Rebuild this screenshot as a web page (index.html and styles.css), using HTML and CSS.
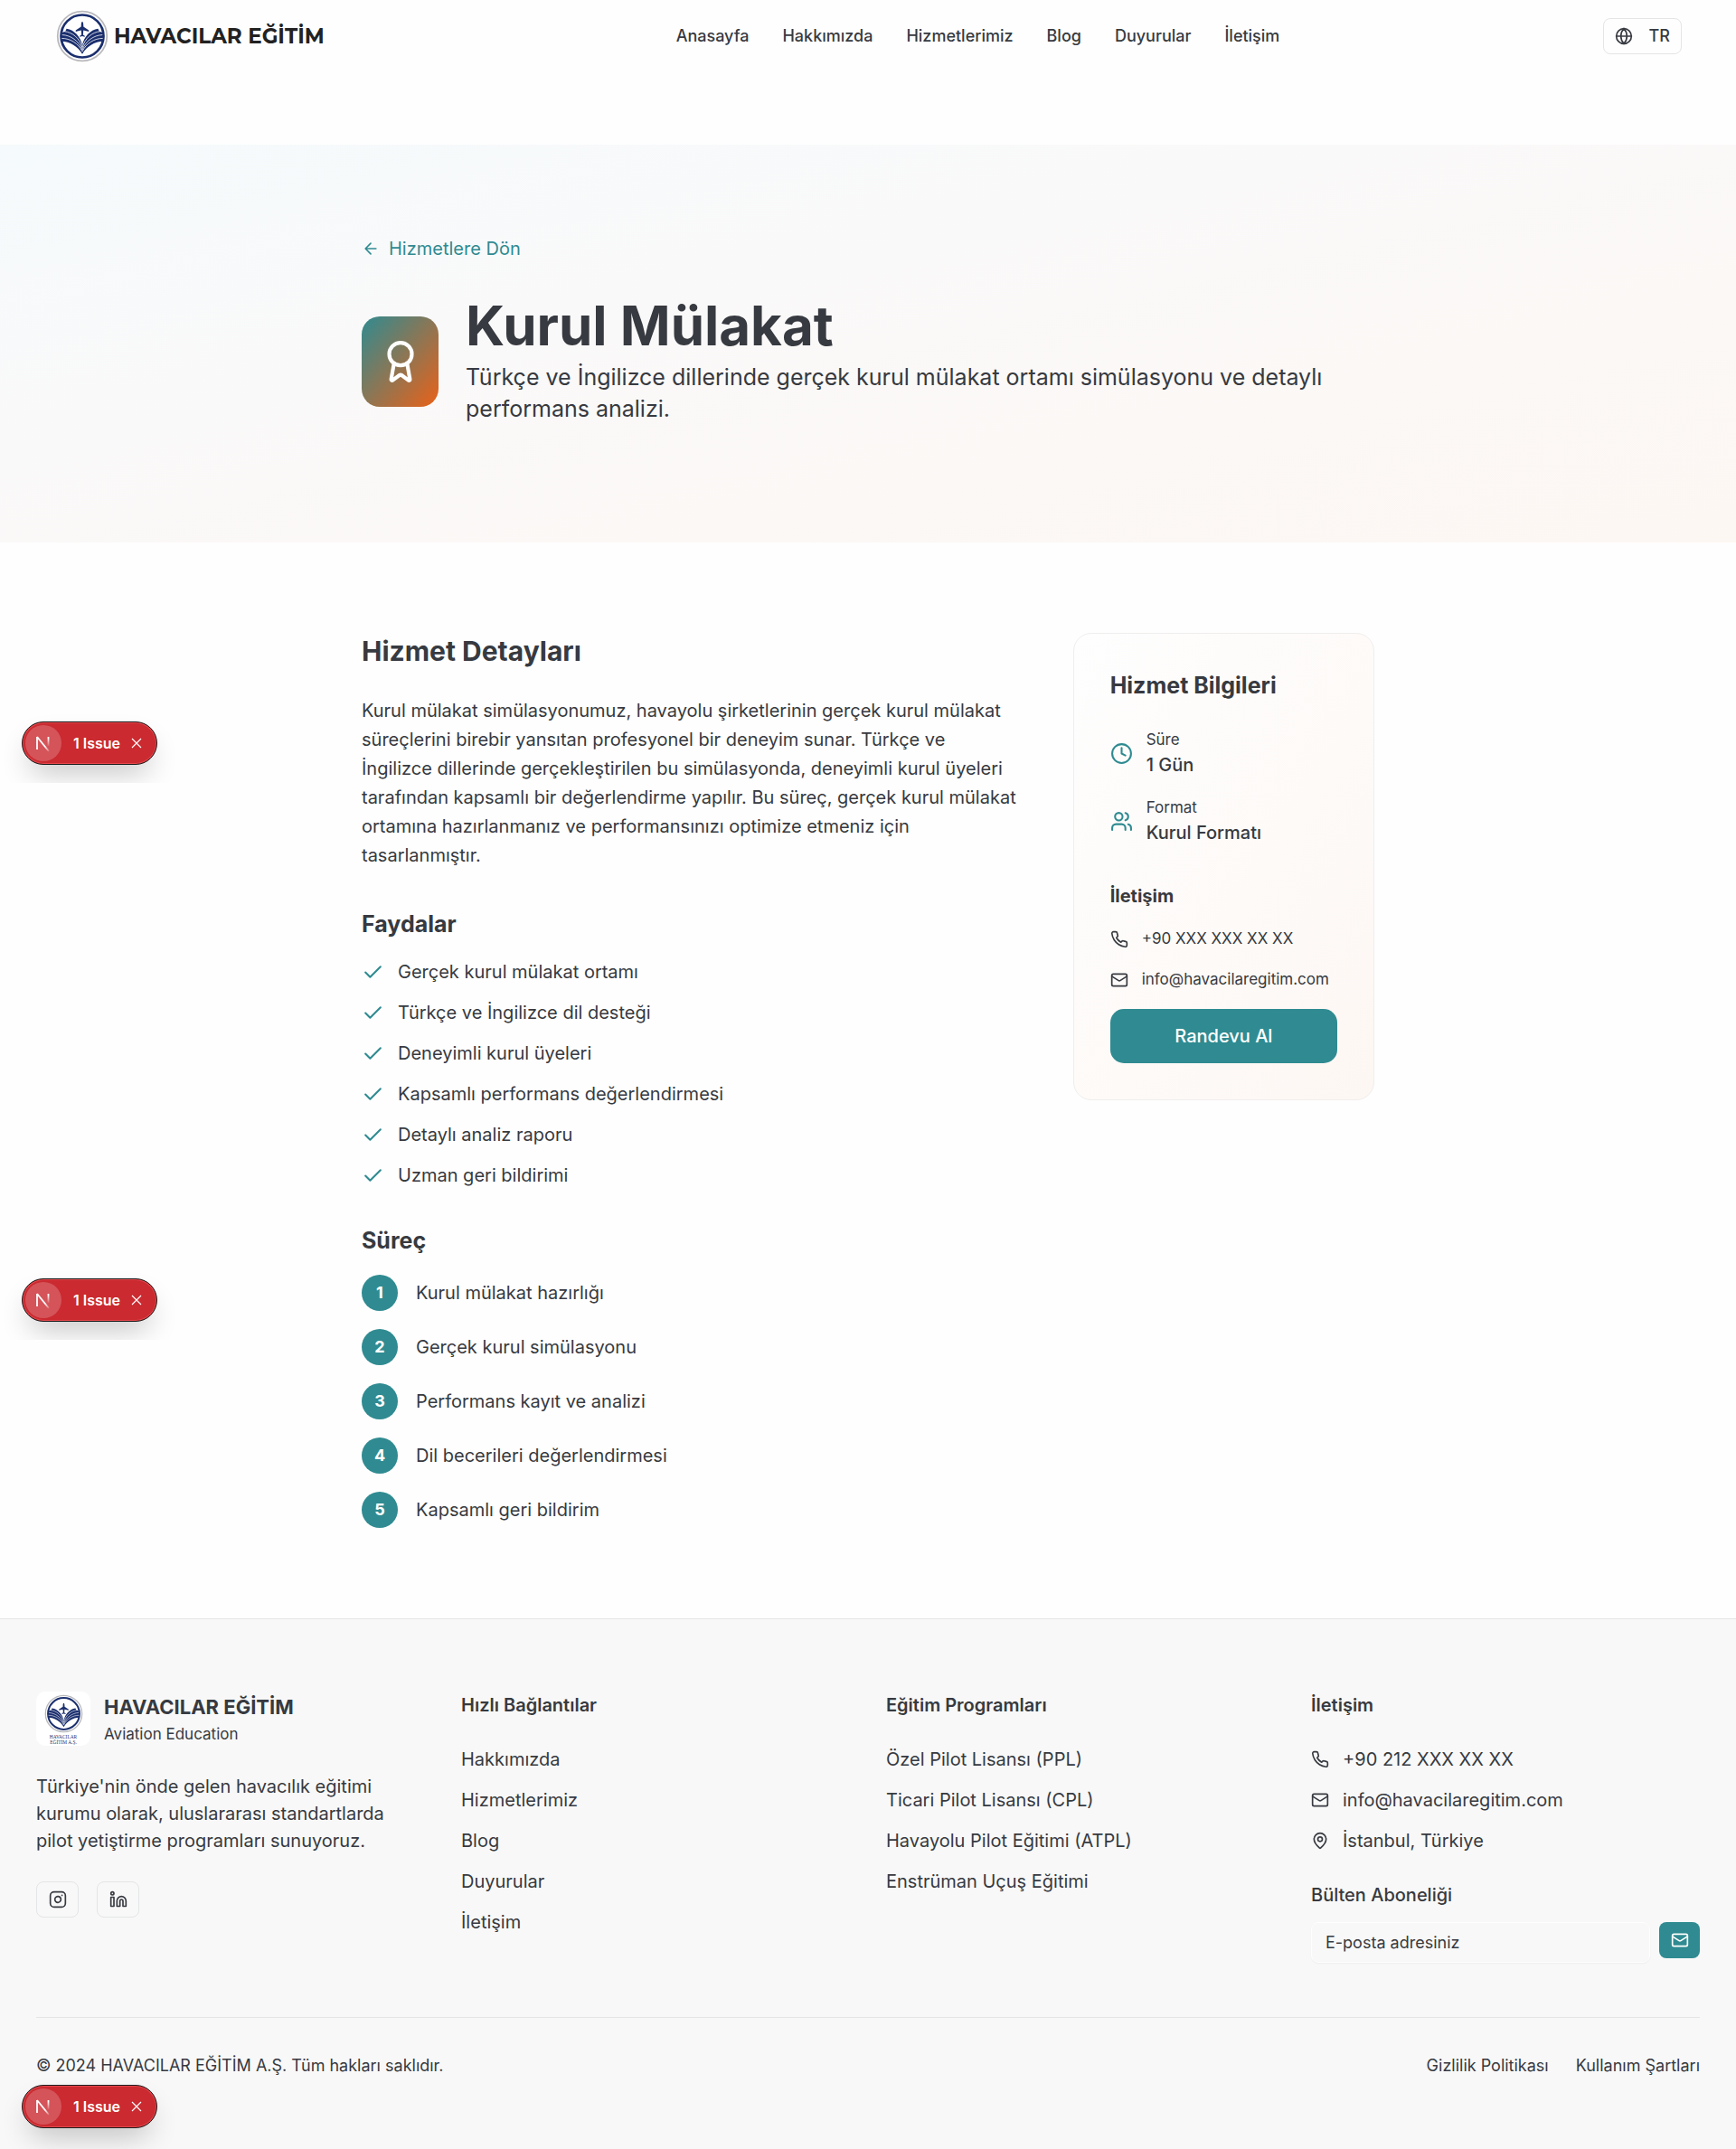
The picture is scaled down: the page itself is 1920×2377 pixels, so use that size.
FILE: index.html
```html
<!DOCTYPE html>
<html lang="tr">
<head>
<meta charset="utf-8">
<meta name="viewport" content="width=device-width, initial-scale=1">
<title>Kurul Mülakat | Havacılar Eğitim</title>
<link rel="stylesheet" href="styles.css">
</head>
<body>
<svg class="defs" aria-hidden="true">
  <symbol id="i-check" viewBox="0 0 24 24"><path d="M20 6 9 17l-5-5"/></symbol>
  <symbol id="i-phone" viewBox="0 0 24 24"><path d="M22 16.92v3a2 2 0 0 1-2.18 2 19.79 19.79 0 0 1-8.63-3.07 19.5 19.5 0 0 1-6-6 19.79 19.79 0 0 1-3.07-8.67A2 2 0 0 1 4.11 2h3a2 2 0 0 1 2 1.72 12.84 12.84 0 0 0 .7 2.81 2 2 0 0 1-.45 2.11L8.09 9.91a16 16 0 0 0 6 6l1.27-1.27a2 2 0 0 1 2.11-.45 12.84 12.84 0 0 0 2.81.7A2 2 0 0 1 22 16.92z"/></symbol>
  <symbol id="i-mail" viewBox="0 0 24 24"><rect width="20" height="16" x="2" y="4" rx="2"/><path d="m22 7-8.97 5.7a1.94 1.94 0 0 1-2.06 0L2 7"/></symbol>
  <symbol id="i-emblem" viewBox="0 0 60 60">
    <circle cx="30" cy="30" r="28.2" fill="#fff" stroke="#b9b9bd" stroke-width="1.8"/>
    <circle cx="30" cy="30" r="24.3" fill="#fff" stroke="#1b2f6e" stroke-width="2.8"/>
    <path fill="#1b2f6e" d="M30 13.5c.8 0 1.2 1.5 1.3 3.8v1.9l6.200 4v1.700l-6.200-1.700-.4 5.200 2 1.400v.9L30 30l-2.900.7v-.9l2-1.400-.4-5.200-6.200 1.700v-1.700l6.200-4v-1.900c.1-2.300.5-3.800 1.300-3.800z"/>
    <path fill="#1b2f6e" d="M12 21.500c9 1.500 16 9 18 19 2-10 9-17.500 18-19l1.500 3 3 1 1.500 3v7.500c-10 0-19 6-24 14.500-5-8.500-14-14.500-24-14.500v-7.500l1.500-3 3-1z"/>
    <g fill="none" stroke="#fff" stroke-width=".8">
      <path d="M9.500 24.500C19 25.500 27 32.500 30 43c3-10.500 11-17.500 20.500-18.500"/>
      <path d="M7 28.500C17 29 26 35.500 30 45.500c4-10 13-16.500 23-17"/>
      <path d="M6.500 32.500C16 32.500 25.500 38 30 47.500c4.500-9.500 14-15 23.500-15"/>
    </g>
  </symbol>
  <linearGradient id="fade-diagonal" gradientUnits="userSpaceOnUse" x1="8" y1="10" x2="17" y2="20"><stop offset=".4" stop-color="#fff"/><stop offset="1" stop-color="#fff" stop-opacity="0"/></linearGradient>
  <linearGradient id="fade-down" gradientUnits="userSpaceOnUse" x1="15" y1="2" x2="15" y2="14"><stop offset=".2" stop-color="#fff"/><stop offset="1" stop-color="#fff" stop-opacity="0"/></linearGradient>
  <symbol id="i-next" viewBox="0 0 20 20"><path fill="none" stroke="#fff" stroke-width="1.800" d="M3 17V3"/><path fill="none" stroke="url(#fade-diagonal)" stroke-width="1.800" d="m3 3 13 16"/><path fill="none" stroke="url(#fade-down)" stroke-width="1.800" d="M15.500 3v10"/></symbol>
  <symbol id="i-x" viewBox="0 0 12 12"><path d="m1 1 10 10M11 1 1 11"/></symbol>
</svg>

<header class="header">
  <a class="brand" href="#"><svg class="brand-mark" aria-hidden="true"><use href="#i-emblem"/></svg><span class="brand-name">HAVACILAR EĞİTİM</span></a>
  <nav class="nav" aria-label="Ana menü">
    <a href="#">Anasayfa</a><a href="#">Hakkımızda</a><a href="#">Hizmetlerimiz</a><a href="#">Blog</a><a href="#">Duyurular</a><a href="#">İletişim</a>
  </nav>
  <button class="lang" type="button"><svg class="icon icon-sm" viewBox="0 0 24 24" aria-hidden="true"><circle cx="12" cy="12" r="10"/><path d="M12 2a14.500 14.500 0 0 0 0 20 14.500 14.500 0 0 0 0-20M2 12h20"/></svg><span>TR</span></button>
</header>

<main>
  <section class="hero">
    <div class="container">
      <a class="back" href="#"><svg class="icon icon-sm" viewBox="0 0 24 24" aria-hidden="true"><path d="m12 19-7-7 7-7M19 12H5"/></svg>Hizmetlere Dön</a>
      <div class="hero-row">
        <div class="hero-icon"><svg class="icon" viewBox="0 0 24 24" aria-hidden="true"><path d="m15.477 12.890 1.515 8.526a.5.5 0 0 1-.810.470l-3.580-2.687a1 1 0 0 0-1.197 0l-3.586 2.686a.5.5 0 0 1-.810-.469l1.514-8.526"/><circle cx="12" cy="8" r="6"/></svg></div>
        <div>
          <h1>Kurul Mülakat</h1>
          <p class="lead">Türkçe ve İngilizce dillerinde gerçek kurul mülakat ortamı simülasyonu ve detaylı performans analizi.</p>
        </div>
      </div>
    </div>
  </section>

  <section class="container details">
    <article class="content">
      <h2>Hizmet Detayları</h2>
      <p class="description">Kurul mülakat simülasyonumuz, havayolu şirketlerinin gerçek kurul mülakat süreçlerini birebir yansıtan profesyonel bir deneyim sunar. Türkçe ve İngilizce dillerinde gerçekleştirilen bu simülasyonda, deneyimli kurul üyeleri tarafından kapsamlı bir değerlendirme yapılır. Bu süreç, gerçek kurul mülakat ortamına hazırlanmanız ve performansınızı optimize etmeniz için tasarlanmıştır.</p>
      <h3>Faydalar</h3>
      <ul class="benefits">
        <li><svg class="icon icon-md" aria-hidden="true"><use href="#i-check"/></svg>Gerçek kurul mülakat ortamı</li>
        <li><svg class="icon icon-md" aria-hidden="true"><use href="#i-check"/></svg>Türkçe ve İngilizce dil desteği</li>
        <li><svg class="icon icon-md" aria-hidden="true"><use href="#i-check"/></svg>Deneyimli kurul üyeleri</li>
        <li><svg class="icon icon-md" aria-hidden="true"><use href="#i-check"/></svg>Kapsamlı performans değerlendirmesi</li>
        <li><svg class="icon icon-md" aria-hidden="true"><use href="#i-check"/></svg>Detaylı analiz raporu</li>
        <li><svg class="icon icon-md" aria-hidden="true"><use href="#i-check"/></svg>Uzman geri bildirimi</li>
      </ul>
      <h3>Süreç</h3>
      <ol class="steps">
        <li><span class="step-no">1</span>Kurul mülakat hazırlığı</li>
        <li><span class="step-no">2</span>Gerçek kurul simülasyonu</li>
        <li><span class="step-no">3</span>Performans kayıt ve analizi</li>
        <li><span class="step-no">4</span>Dil becerileri değerlendirmesi</li>
        <li><span class="step-no">5</span>Kapsamlı geri bildirim</li>
      </ol>
    </article>

    <aside class="card">
      <h3 class="card-title">Hizmet Bilgileri</h3>
      <dl class="facts">
        <div class="fact"><svg class="icon icon-md" viewBox="0 0 24 24" aria-hidden="true"><circle cx="12" cy="12" r="10"/><path d="M12 6v6l4 2"/></svg><div><dt>Süre</dt><dd>1 Gün</dd></div></div>
        <div class="fact"><svg class="icon icon-md" viewBox="0 0 24 24" aria-hidden="true"><path d="M16 21v-2a4 4 0 0 0-4-4H6a4 4 0 0 0-4 4v2M22 21v-2a4 4 0 0 0-3-3.870M16 3.130a4 4 0 0 1 0 7.750"/><circle cx="9" cy="7" r="4"/></svg><div><dt>Format</dt><dd>Kurul Formatı</dd></div></div>
      </dl>
      <h4>İletişim</h4>
      <ul class="card-contact">
        <li><svg class="icon icon-sm" aria-hidden="true"><use href="#i-phone"/></svg>+90 XXX XXX XX XX</li>
        <li><svg class="icon icon-sm" aria-hidden="true"><use href="#i-mail"/></svg>info@havacilaregitim.com</li>
      </ul>
      <button class="book" type="button">Randevu Al</button>
    </aside>
  </section>
</main>

<footer class="footer">
  <div class="footer-grid">
    <div>
      <div class="footer-brand">
        <div class="footer-logo"><svg class="footer-mark" aria-hidden="true"><use href="#i-emblem"/></svg><svg class="footer-caption" viewBox="0 0 60 20" aria-hidden="true"><text x="30" y="8" text-anchor="middle">HAVACILAR</text><text x="30" y="18" text-anchor="middle">EĞİTİM A.Ş.</text></svg></div>
        <div><p class="footer-name">HAVACILAR EĞİTİM</p><p class="small">Aviation Education</p></div>
      </div>
      <p class="about">Türkiye'nin önde gelen havacılık eğitimi kurumu olarak, uluslararası standartlarda pilot yetiştirme programları sunuyoruz.</p>
      <div class="socials">
        <a href="#" aria-label="Instagram"><svg class="icon icon-sm" viewBox="0 0 24 24" aria-hidden="true"><rect width="20" height="20" x="2" y="2" rx="5"/><path d="M16 11.370A4 4 0 1 1 12.630 8 4 4 0 0 1 16 11.370zM17.500 6.500h.01"/></svg></a>
        <a href="#" aria-label="LinkedIn"><svg class="icon icon-sm" viewBox="0 0 24 24" aria-hidden="true"><path d="M16 8a6 6 0 0 1 6 6v7h-4v-7a2 2 0 0 0-4 0v7h-4v-7a6 6 0 0 1 6-6z"/><rect width="4" height="12" x="2" y="9"/><circle cx="4" cy="4" r="2"/></svg></a>
      </div>
    </div>
    <div>
      <h4>Hızlı Bağlantılar</h4>
      <ul class="links"><li><a href="#">Hakkımızda</a></li><li><a href="#">Hizmetlerimiz</a></li><li><a href="#">Blog</a></li><li><a href="#">Duyurular</a></li><li><a href="#">İletişim</a></li></ul>
    </div>
    <div>
      <h4>Eğitim Programları</h4>
      <ul class="links"><li><a href="#">Özel Pilot Lisansı (PPL)</a></li><li><a href="#">Ticari Pilot Lisansı (CPL)</a></li><li><a href="#">Havayolu Pilot Eğitimi (ATPL)</a></li><li><a href="#">Enstrüman Uçuş Eğitimi</a></li></ul>
    </div>
    <div>
      <h4>İletişim</h4>
      <ul class="links contact">
        <li><svg class="icon icon-sm" aria-hidden="true"><use href="#i-phone"/></svg>+90 212 XXX XX XX</li>
        <li><svg class="icon icon-sm" aria-hidden="true"><use href="#i-mail"/></svg>info@havacilaregitim.com</li>
        <li><svg class="icon icon-sm" viewBox="0 0 24 24" aria-hidden="true"><path d="M20 10c0 4.993-5.539 10.193-7.399 11.799a1 1 0 0 1-1.202 0C9.539 20.193 4 14.993 4 10a8 8 0 0 1 16 0"/><circle cx="12" cy="10" r="3"/></svg>İstanbul, Türkiye</li>
      </ul>
      <form class="newsletter">
        <label for="email">Bülten Aboneliği</label>
        <div class="newsletter-row">
          <input id="email" type="email" placeholder="E-posta adresiniz">
          <button type="button" aria-label="Abone ol"><svg class="icon icon-sm" aria-hidden="true"><use href="#i-mail"/></svg></button>
        </div>
      </form>
    </div>
  </div>
  <div class="footer-bottom">
    <p>© 2024 HAVACILAR EĞİTİM A.Ş. Tüm hakları saklıdır.</p>
    <div class="legal"><a href="#">Gizlilik Politikası</a><a href="#">Kullanım Şartları</a></div>
  </div>
</footer>

<div class="issue issue-first"><span class="issue-logo"><svg aria-hidden="true"><use href="#i-next"/></svg></span><span>1 Issue</span><button type="button" aria-label="Kapat"><svg aria-hidden="true"><use href="#i-x"/></svg></button></div>
<div class="issue issue-second"><span class="issue-logo"><svg aria-hidden="true"><use href="#i-next"/></svg></span><span>1 Issue</span><button type="button" aria-label="Kapat"><svg aria-hidden="true"><use href="#i-x"/></svg></button></div>
<div class="issue issue-last"><span class="issue-logo"><svg aria-hidden="true"><use href="#i-next"/></svg></span><span>1 Issue</span><button type="button" aria-label="Kapat"><svg aria-hidden="true"><use href="#i-x"/></svg></button></div>
</body>
</html>
```
FILE: styles.css
```css
:root {
  --ink: #373a40;
  --teal: #2f8b91;
  --line: #e4e5e6;
}

* { box-sizing: border-box; margin: 0; padding: 0; }

body {
  position: relative;
  background: #fefefe;
  color: var(--ink);
  font: 20px/30px Inter, "Liberation Sans", sans-serif;
}

a { color: inherit; text-decoration: none; }
ul, ol { list-style: none; }
button { font: inherit; color: inherit; cursor: pointer; }

.defs { position: absolute; width: 0; height: 0; }

.icon {
  flex: none;
  fill: none;
  stroke: currentColor;
  stroke-width: 2;
  stroke-linecap: round;
  stroke-linejoin: round;
}
.icon-sm { width: 20px; height: 20px; }
.icon-md { width: 25px; height: 25px; color: var(--teal); }

.small { font-size: 17px; line-height: 25px; }

/* Header */
.header {
  display: flex;
  align-items: center;
  justify-content: space-between;
  height: 80px;
  margin-bottom: 80px;
  padding: 0 60px;
}
.brand { display: flex; align-items: center; gap: 4px; width: 330px; }
.brand-mark { flex: none; width: 62px; height: 58px; }
.brand-name {
  color: #222;
  font: 700 23px/30px Montserrat, "DejaVu Sans", sans-serif;
  white-space: nowrap;
}
.nav { display: flex; gap: 37px; font-size: 18px; font-weight: 500; }
.lang {
  display: flex;
  align-items: center;
  justify-content: space-between;
  width: 87px;
  height: 40px;
  padding: 0 12px;
  border: 1px solid var(--line);
  border-radius: 8px;
  background: #fefefe;
  font-size: 18px;
  font-weight: 500;
}

/* Hero */
.container { width: 100%; max-width: 1120px; margin: 0 auto; }
.hero {
  padding: 100px 0 130px;
  background: linear-gradient(to bottom right, #f5fafc 0%, #faf9f9 40%, #fdf7f3 100%);
}
.back { display: inline-flex; align-items: center; gap: 10px; margin-bottom: 40px; color: var(--teal); vertical-align: top; }
.hero-row { display: flex; align-items: center; gap: 30px; }
.hero-icon {
  display: flex;
  align-items: center;
  justify-content: center;
  flex: none;
  width: 85px;
  height: 100px;
  border-radius: 20px;
  background: linear-gradient(to bottom right, #2f8b91, #ea6118);
  color: #fff;
}
.hero-icon .icon { width: 50px; height: 50px; }
h1 { margin-bottom: 10px; font-size: 60px; line-height: 60px; font-weight: 700; }
.lead { font-size: 25px; line-height: 35px; }

/* Details */
.details {
  display: grid;
  grid-template-columns: repeat(3, minmax(0, 1fr));
  gap: 60px;
  align-items: start;
  padding: 100px 0;
}
.content { grid-column: span 2; }
h2 { margin-bottom: 30px; font-size: 30px; line-height: 40px; font-weight: 700; }
h3 { margin-bottom: 20px; font-size: 25px; line-height: 35px; font-weight: 700; }
h4 { font-size: 20px; font-weight: 700; }
.description { margin-bottom: 43px; line-height: 32px; }
.benefits { display: grid; gap: 15px; margin-bottom: 40px; }
.benefits li { display: flex; align-items: center; gap: 15px; }
.steps { display: grid; gap: 20px; }
.steps li { display: flex; align-items: center; gap: 20px; }
.step-no {
  width: 40px;
  border-radius: 50%;
  background: var(--teal);
  color: #fff;
  font-size: 18px;
  font-weight: 700;
  line-height: 40px;
  text-align: center;
}

/* Info card */
.card {
  padding: 40px;
  border: 1px solid #f0eeed;
  border-radius: 20px;
  background: linear-gradient(to bottom right, #fefefe, #fdf7f3);
}
.card-title { margin-bottom: 30px; }
.facts { display: grid; gap: 20px; margin-bottom: 40px; }
.fact { display: flex; align-items: center; gap: 15px; }
.fact dt { font-size: 17px; line-height: 25px; }
.fact dd { font-weight: 500; }
.card-contact { display: grid; gap: 20px; margin: 20px 0; font-size: 17px; line-height: 25px; }
.card-contact li { display: flex; align-items: center; gap: 15px; }
.book {
  width: 100%;
  height: 60px;
  border: 0;
  border-radius: 15px;
  background: var(--teal);
  color: #fff;
  font-weight: 500;
}

/* Footer */
.footer { padding: 80px 40px; border-top: 1px solid var(--line); background: #f8f8f8; }
.footer-grid { display: grid; grid-template-columns: repeat(4, minmax(0, 1fr)); gap: 40px; }
.footer-brand { display: flex; gap: 15px; margin-bottom: 30px; }
.footer-logo {
  display: flex;
  flex-direction: column;
  align-items: center;
  gap: 1px;
  width: 60px;
  height: 60px;
  padding-top: 3px;
  border-radius: 10px;
  background: #fff;
}
.footer-mark { width: 43px; height: 43px; }
.footer-caption { width: 36px; height: 12px; fill: #1b2f6e; font: 9px "Liberation Serif", serif; }
.footer-name { font-size: 22px; line-height: 35px; font-weight: 700; }
.about { margin-bottom: 30px; }
.socials { display: flex; gap: 20px; }
.socials a {
  display: flex;
  align-items: center;
  justify-content: center;
  width: 47px;
  height: 40px;
  border: 1px solid var(--line);
  border-radius: 8px;
}
.footer h4 { margin-bottom: 30px; font-weight: 600; }
.links { display: grid; gap: 15px; }
.contact li { display: flex; align-items: center; gap: 15px; }
.newsletter { margin-top: 30px; }
.newsletter label { display: block; margin-bottom: 15px; font-weight: 500; }
.newsletter-row { display: flex; align-items: flex-start; gap: 10px; }
.newsletter input {
  flex: 1;
  min-width: 0;
  height: 45px;
  padding: 0 15px;
  border: 1px solid #fefefe;
  border-radius: 8px;
  background: #f8f8f8;
  box-shadow: 0 1px 2px rgba(0, 0, 0, .04);
  color: inherit;
  font: 18px/25px Inter, sans-serif;
}
.newsletter input::placeholder { color: var(--ink); opacity: 1; }
.newsletter button {
  display: flex;
  align-items: center;
  justify-content: center;
  width: 45px;
  height: 40px;
  border: 0;
  border-radius: 8px;
  background: var(--teal);
  color: #fff;
}
.footer-bottom {
  display: flex;
  justify-content: space-between;
  margin-top: 60px;
  padding-top: 40px;
  border-top: 1px solid var(--line);
  font-size: 18px;
  line-height: 25px;
}
.legal { display: flex; gap: 30px; }

/* Floating issue indicators, laid over the page */
.issue {
  position: absolute;
  left: 24px;
  display: flex;
  align-items: center;
  width: 150px;
  height: 48px;
  padding: 0 13px 0 3px;
  border: 1px solid #1b1b1b;
  border-radius: 24px;
  background: #ca2a30;
  box-shadow: inset 0 0 0 1px #e5484d, 0 16px 32px -8px rgba(0, 0, 0, .24);
  color: #fff;
  font-size: 16px;
  line-height: 20px;
  font-weight: 600;
  white-space: nowrap;
}
.issue-logo {
  display: flex;
  align-items: center;
  justify-content: center;
  flex: none;
  width: 40px;
  height: 40px;
  margin-right: 13px;
  border-radius: 50%;
  background: rgba(255, 255, 255, .2);
}
.issue-logo svg { width: 20px; height: 20px; }
.issue button { display: flex; margin-left: auto; padding: 3px; border: 0; background: none; }
.issue button svg { width: 12px; height: 12px; fill: none; stroke: #fff; stroke-width: 1.2; }
.issue-first { top: 798px; clip-path: inset(-40px -40px -20px -40px); }
.issue-second { top: 1414px; clip-path: inset(-40px -40px -20px -40px); }
.issue-last { bottom: 23px; clip-path: inset(-40px -40px -23px -40px); }
```
